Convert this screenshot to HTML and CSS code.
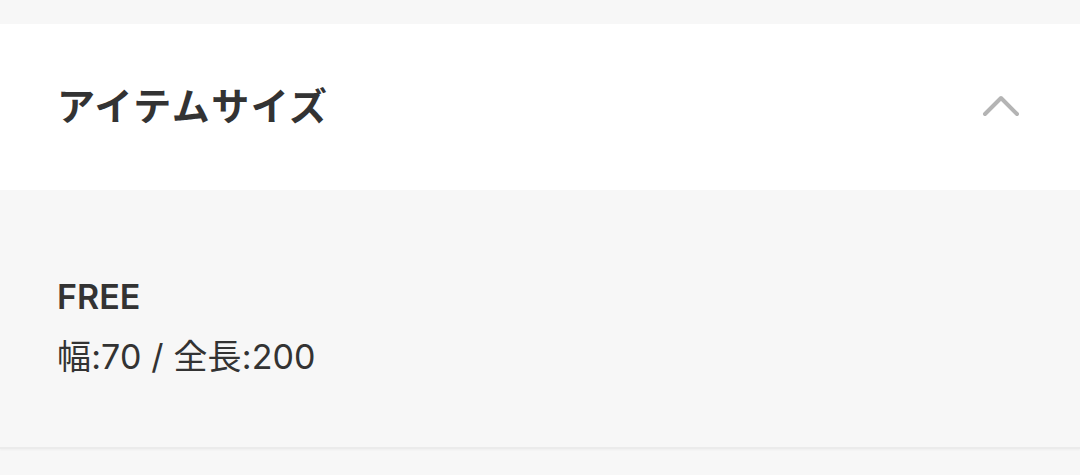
FILE: index.html
```html
<!DOCTYPE html>
<html lang="ja">
<head>
<meta charset="utf-8">
<link rel="stylesheet" href="styles.css">
</head>
<body>
<div class="top-strip"></div>
<section class="accordion">
  <div class="acc-header">
    <h2 class="acc-title">アイテムサイズ</h2>
    <svg class="chevron" width="44" height="24" viewBox="0 0 44 24" aria-hidden="true">
      <polyline points="6,20 22,4 38,20" fill="none" stroke="#b4b4b4" stroke-width="4" stroke-linecap="round" stroke-linejoin="round"/>
    </svg>
  </div>
  <div class="acc-body">
    <p class="size-name">FREE</p>
    <p class="size-detail">幅:70 / 全長:200</p>
  </div>
</section>
<div class="bottom"></div>
</body>
</html>
```
FILE: styles.css
```css
html, body {
  margin: 0;
  padding: 0;
  background: #f7f7f7;
  font-family: Inter, "Noto Sans CJK JP", sans-serif;
  color: #333333;
}
.top-strip {
  height: 24px;
  background: #f7f7f7;
}
.acc-header {
  height: 166px;
  background: #ffffff;
  display: flex;
  align-items: center;
  justify-content: space-between;
  padding: 0 57px 0 57px;
}
.acc-title {
  margin: 0;
  font-family: "Noto Sans CJK JP", sans-serif;
  font-size: 38px;
  font-weight: 700;
  color: #333333;
  letter-spacing: 1.5px;
  line-height: 1;
  margin-top: -6px;
}
.chevron {
  display: block;
  margin-top: -2px;
}
.acc-body {
  background: #f7f7f7;
  padding: 77px 57px 60px;
  border-bottom: 2px solid #ebebeb;
  box-shadow: 0 1px 2px rgba(0,0,0,0.04);
}
.acc-body p {
  margin: 0;
  font-size: 34px;
  line-height: 60px;
  color: #333333;
}
.size-name {
  font-weight: 600;
}
.size-detail {
  font-weight: 400;
  letter-spacing: 0.15px;
}
.bottom {
  height: 40px;
}
```
